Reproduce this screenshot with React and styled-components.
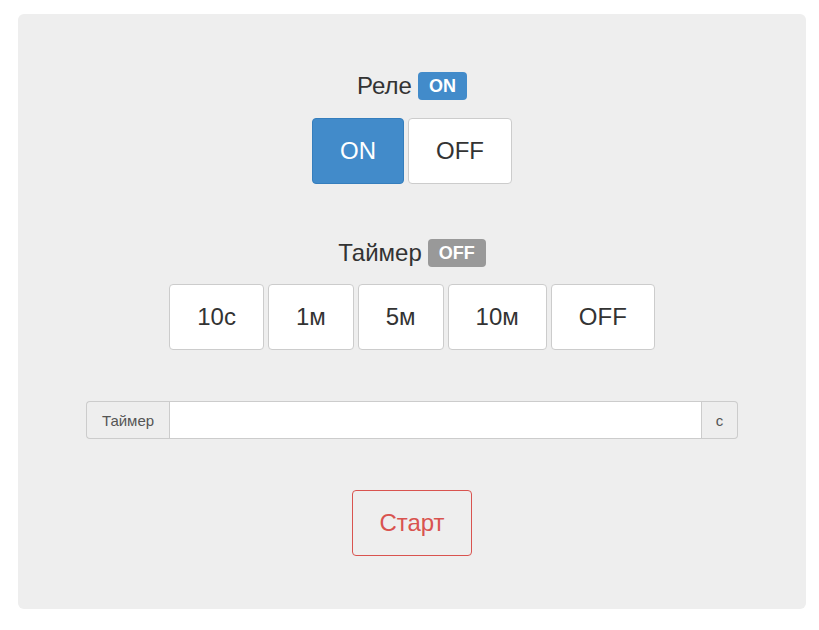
import React, { useState } from "react";
import styled, { createGlobalStyle } from "styled-components";

const GlobalStyle = createGlobalStyle`
  body {
    margin: 0;
    background: #fff;
    font-family: "Liberation Sans", Arial, sans-serif;
    color: #333;
  }
`;

const Page = styled.div`
  padding: 14px 13px 21px 18px;
`;

const Panel = styled.div`
  width: 788px;
  height: 595px;
  box-sizing: border-box;
  background: #eee;
  border-radius: 6px;
  padding: 57px 68px 0;
  display: flex;
  flex-direction: column;
  align-items: center;
`;

const Section = styled.div`
  display: flex;
  flex-direction: column;
  align-items: center;
  margin-bottom: ${(p) => p.$gap || 0}px;
`;

const Title = styled.div`
  font-size: 24px;
  line-height: 30px;
  height: 30px;
  margin-bottom: ${(p) => p.$mb || 17}px;
  display: flex;
  align-items: center;
  gap: 6px;
`;

const Badge = styled.span`
  display: inline-block;
  font-size: 18px;
  font-weight: bold;
  line-height: 1;
  color: #fff;
  padding: 5px 11px 5px;
  border-radius: 4px;
  background: ${(p) => (p.$on ? "#428bca" : "#999")};
`;

const ButtonRow = styled.div`
  display: flex;
  gap: 4px;
`;

const Button = styled.button`
  font-family: inherit;
  font-size: 24px;
  line-height: 32px;
  padding: 16px ${(p) => p.$px || 27}px;
  border-radius: 4px;
  border: 1px solid ${(p) => (p.$active ? "#357ebd" : "#ccc")};
  background: ${(p) => (p.$active ? "#428bca" : "#fff")};
  color: ${(p) => (p.$active ? "#fff" : "#333")};
  cursor: pointer;
`;

const InputGroup = styled.div`
  display: flex;
  width: 100%;
  height: 38px;
  margin-bottom: 51px;
`;

const Addon = styled.span`
  display: flex;
  align-items: center;
  justify-content: center;
  box-sizing: border-box;
  width: ${(p) => p.$w}px;
  font-size: 15px;
  color: #555;
  background: #eee;
  border: 1px solid #ccc;
  border-radius: ${(p) => (p.$right ? "0 4px 4px 0" : "4px 0 0 4px")};
  ${(p) => (p.$right ? "border-left: 0;" : "border-right: 0;")}
`;

const Input = styled.input`
  flex: 1;
  min-width: 0;
  box-sizing: border-box;
  border: 1px solid #ccc;
  background: #fff;
  font-family: inherit;
  font-size: 14px;
  padding: 6px 12px;
  outline: none;
`;

const StartButton = styled.button`
  font-family: inherit;
  font-size: 24px;
  line-height: 32px;
  padding: 16px 26px;
  border-radius: 4px;
  border: 1px solid #d9534f;
  background: transparent;
  color: #d9534f;
  cursor: pointer;
`;

const timers = ["10с", "1м", "5м", "10м", "OFF"];

export default function App() {
  const [relay, setRelay] = useState(true);
  return (
    <Page>
      <GlobalStyle />
      <Panel>
        <Section $gap={54}>
          <Title>
            Реле <Badge $on={relay}>{relay ? "ON" : "OFF"}</Badge>
          </Title>
          <ButtonRow>
            <Button $active={relay} onClick={() => setRelay(true)}>
              ON
            </Button>
            <Button $active={!relay} onClick={() => setRelay(false)}>
              OFF
            </Button>
          </ButtonRow>
        </Section>
        <Section $gap={51}>
          <Title $mb={16}>
            Таймер <Badge>OFF</Badge>
          </Title>
          <ButtonRow>
            {timers.map((t) => (
              <Button key={t} $px={27}>
                {t}
              </Button>
            ))}
          </ButtonRow>
        </Section>
        <InputGroup>
          <Addon $w={83}>Таймер</Addon>
          <Input type="text" />
          <Addon $w={36} $right>
            с
          </Addon>
        </InputGroup>
        <StartButton>Старт</StartButton>
      </Panel>
    </Page>
  );
}
